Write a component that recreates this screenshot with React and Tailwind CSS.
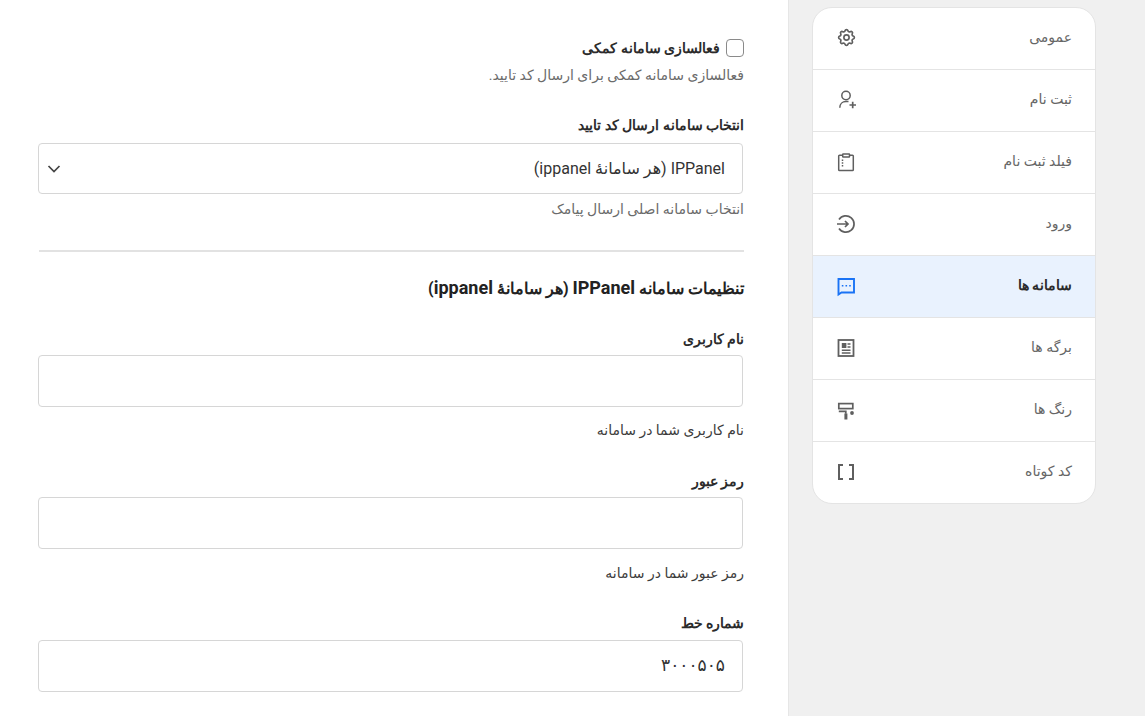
import React from "react";
import { TbSettings } from "react-icons/tb";
import { MdOutlineDataArray } from "react-icons/md";

const Svg = ({ children }) => (
  <svg width="24" height="24" viewBox="0 0 24 24" fill="none" stroke="currentColor" strokeWidth="1.5">{children}</svg>
);
const Gear = () => <span className="flex h-[24px] w-[24px] items-center justify-center"><TbSettings size={21} strokeWidth={1.9} /></span>;
const Person = () => (
  <Svg>
    <circle cx="12" cy="7.5" r="4.2" />
    <path d="M5.8 19.8c0-3.6 2.6-6.2 6.2-6.2h2.5" />
    <path d="M15.5 17h6.5M18.7 13.7v6.6" strokeWidth="1.7" />
  </Svg>
);
const Clip = () => (
  <Svg>
    <rect x="4.7" y="5.3" width="14.6" height="15.2" rx="0.8" />
    <rect x="8.7" y="4" width="6.8" height="3" rx="0.5" fill="#fff" />
    <path d="M8.5 9.5v8" strokeDasharray="1.4 1.4" />
  </Svg>
);
const Login = () => (
  <Svg>
    <path d="M5 7.5A8.2 8.2 0 1 1 5 16.5" strokeWidth="1.7" />
    <path d="M3 12h11M11 9l3 3-3 3" strokeWidth="1.7" />
  </Svg>
);
const Sms = () => (
  <Svg>
    <path d="M4.5 5h15.5v13.5H7.5L4.5 20.5z" strokeWidth="1.9" />
    <path d="M7.8 10.9h1.6v1.6H7.8zM11.5 10.9h1.6v1.6h-1.6zM15.2 10.9h1.6v1.6h-1.6z" fill="currentColor" stroke="none" />
  </Svg>
);
const Article = () => (
  <Svg>
    <rect x="4.5" y="4" width="15" height="16" strokeWidth="1.8" />
    <path d="M7.8 7h4.6v5H7.8z" fill="currentColor" stroke="none" />
    <path d="M13.5 8h3M13.5 11h3M7.8 14.2h8.7M7.8 17h8.7" />
  </Svg>
);
const Paint = () => (
  <Svg>
    <rect x="4.8" y="5.6" width="14" height="5" strokeWidth="1.7" />
    <path d="M4.8 13.4h7v2.4" strokeWidth="1.7" />
    <path d="M10.4 15.5h3v6h-3z" fill="currentColor" stroke="none" />
    <circle cx="18" cy="15" r="1.9" fill="currentColor" stroke="none" />
  </Svg>
);
const Brackets = () => <MdOutlineDataArray size={24} />;

const items = [
  { t: "عمومی", I: Gear },
  { t: "ثبت نام", I: Person },
  { t: "فیلد ثبت نام", I: Clip },
  { t: "ورود", I: Login },
  { t: "سامانه ها", I: Sms, active: true },
  { t: "برگه ها", I: Article },
  { t: "رنگ ها", I: Paint },
  { t: "کد کوتاه", I: Brackets },
];

const boldFont = "font-['Roboto','Noto_Sans',sans-serif] font-bold";

function Field({ label, help, value, className = "", gap = "mt-[4px]", helpGap = "mt-[11px]" }) {
  return (
    <div className={className}>
      <div className={`text-[14px] leading-[24px] text-[#2b2b2b] ${boldFont}`}>{label}</div>
      <div className={`${gap} mr-[1px] h-[52px] w-[705px] rounded-[4px] border border-[#d6d6d6] bg-white flex items-center px-[17px] text-[17px] text-[#333]`}>{value}</div>
      {help && <div className={`${helpGap} text-[14px] leading-[24px] text-[#3c3c3c]`}>{help}</div>}
    </div>
  );
}

export default function App() {
  return (
    <div dir="rtl" className="flex h-[716px] w-[1145px] overflow-hidden bg-[#f0f0f0] font-['Roboto','DejaVu_Sans',sans-serif]">
      <aside className="mr-[49px] mt-[7px] self-start w-[284px] shrink-0 rounded-[20px] border border-[#e4e4e4] bg-white overflow-hidden">
        {items.map(({ t, I, active }, i) => (
          <div key={t} className={`flex items-center justify-between pb-[2px] ${i ? "h-[62px] border-t border-[#e4e4e4]" : "h-[61px]"} pr-[23px] pl-[21px] ${active ? `bg-[#e9f2fe] text-[#2b2b2b] ${boldFont}` : "text-[#666]"} text-[14px]`}>
            <span>{t}</span>
            <span className={active ? "text-[#1a73f5]" : "text-[#5f5f5f]"}><I /></span>
          </div>
        ))}
      </aside>
      <main className="mr-[23px] h-[716px] w-[789px] shrink-0 border-r border-[#e6e6e6] bg-white pr-[44px] pt-[39px]">
        <div className="w-[706px]">
          <label className="flex items-center gap-[6px] h-[18px]">
            <span className="h-[18px] w-[18px] rounded-[4px] border border-[#8a8a8a] bg-white" />
            <span className={`text-[14px] text-[#2b2b2b] ${boldFont}`}>فعالسازی سامانه کمکی</span>
          </label>
          <div className="mt-[6px] text-[14px] leading-[24px] text-[#6b6b6b]">فعالسازی سامانه کمکی برای ارسال کد تایید.</div>
          <div className={`mt-[26px] text-[14px] leading-[24px] text-[#2b2b2b] ${boldFont}`}>انتخاب سامانه ارسال کد تایید</div>
          <div className="mt-[6px] mr-[1px] h-[51px] w-[705px] rounded-[4px] border border-[#d6d6d6] flex items-center justify-between pr-[17px] pl-[7px] text-[16px] text-[#333]">
            <span>IPPanel (هر سامانهٔ ippanel)</span>
            <svg width="16" height="16" viewBox="0 0 16 16" fill="none" stroke="#444" strokeWidth="1.7"><path d="M2.5 5 8 10.5 13.5 5" /></svg>
          </div>
          <div className="mt-[3px] text-[14px] leading-[24px] text-[#6b6b6b]">انتخاب سامانه اصلی ارسال پیامک</div>
          <hr className="mt-[29px] w-[705px] border-0 border-t-2 border-[#e2e2e2]" />
          <h2 className={`mt-[24px] text-[16px] leading-[24px] text-[#222] ${boldFont}`}>
            تنظیمات سامانه <span className="text-[18px]">IPPanel</span> (هر سامانهٔ <span className="text-[18px]">ippanel</span>)
          </h2>
          <Field className="mt-[26px]" label="نام کاربری" help="نام کاربری شما در سامانه" />
          <Field className="mt-[27px]" label="رمز عبور" help="رمز عبور شما در سامانه" helpGap="mt-[12px]" />
          <Field className="mt-[26px]" label="شماره خط" value="۳۰۰۰۵۰۵" gap="mt-[5px]" />
        </div>
      </main>
    </div>
  );
}
